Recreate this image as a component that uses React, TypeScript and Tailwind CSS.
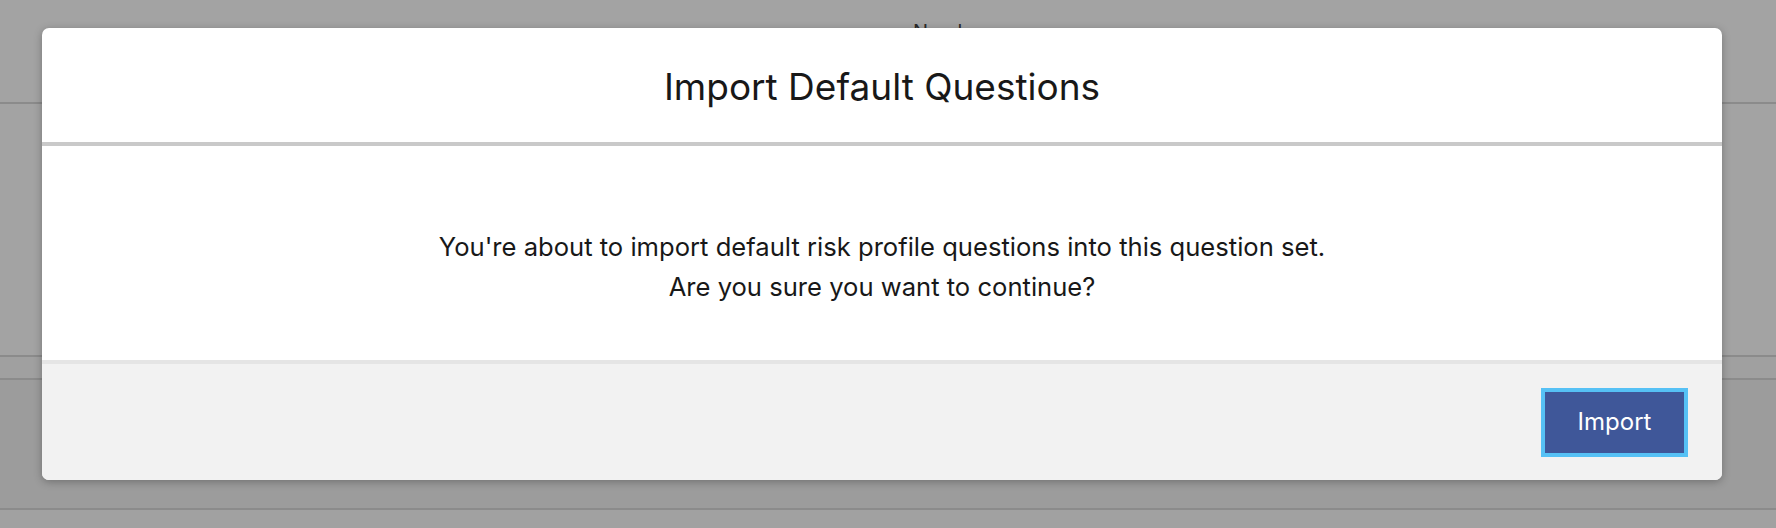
export default function App() {
  return (
    <div className="relative h-[528px] w-[1776px] overflow-hidden bg-[#a3a3a3] font-['Inter','Noto_Sans',sans-serif]">
      {/* page behind the backdrop */}
      <div className="flex h-full flex-col">
        <div className="h-[104px] border-b-2 border-[#8b8b8b] pl-[913px] pt-[22px] text-[20px] leading-none text-[#2b2b2b]">Number</div>
        <div className="h-[253px] border-b-2 border-[#8b8b8b]" />
        <div className="h-[23px] border-b-2 border-[#8b8b8b] bg-[#a0a0a0]" />
        <div className="h-[130px] border-b-2 border-[#8b8b8b] bg-[#9c9c9c]" />
        <div className="flex-1 bg-[#a1a1a1]" />
      </div>

      {/* modal */}
      <div className="absolute left-[42px] top-[28px] flex h-[452px] w-[1680px] flex-col overflow-hidden rounded-[7px] bg-white shadow-[0_2px_8px_rgba(0,0,0,0.28)]">
        <header className="flex h-[118px] shrink-0 items-center justify-center border-b-4 border-[#c9c9c9] pt-[2px]">
          <h2 className="text-[37px] font-normal leading-none text-[#181818]">Import Default Questions</h2>
        </header>
        <div className="flex flex-1 flex-col items-center justify-center pt-[27px] text-center text-[25.6px] leading-[40px] text-[#181818]">
          <p>You're about to import default risk profile questions into this question set.</p>
          <p>Are you sure you want to continue?</p>
        </div>
        <footer className="flex h-[120px] shrink-0 items-center justify-end border-t-4 border-[#e5e5e5] bg-[#f2f2f2] pr-[34px]">
          <button className="h-[69px] w-[147px] border-4 border-[#56c1f5] bg-[#3f5799] text-[24px] text-white">Import</button>
        </footer>
      </div>
    </div>
  )
}
